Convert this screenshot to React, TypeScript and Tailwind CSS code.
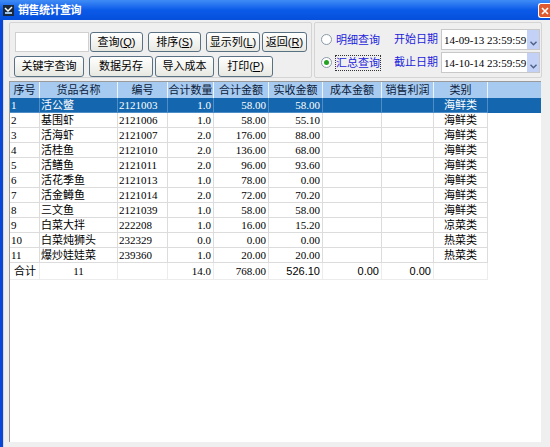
import React from 'react';

type Row = [string, string, string, string, string, string, string];

const rows: Row[] = [
  ['1', '活公鳖', '2121003', '1.0', '58.00', '58.00', '海鲜类'],
  ['2', '基围虾', '2121006', '1.0', '58.00', '55.10', '海鲜类'],
  ['3', '活海虾', '2121007', '2.0', '176.00', '88.00', '海鲜类'],
  ['4', '活桂鱼', '2121010', '2.0', '136.00', '68.00', '海鲜类'],
  ['5', '活鳝鱼', '2121011', '2.0', '96.00', '93.60', '海鲜类'],
  ['6', '活花季鱼', '2121013', '1.0', '78.00', '0.00', '海鲜类'],
  ['7', '活金鳟鱼', '2121014', '2.0', '72.00', '70.20', '海鲜类'],
  ['8', '三文鱼', '2121039', '1.0', '58.00', '58.00', '海鲜类'],
  ['9', '白菜大拌', '222208', '1.0', '16.00', '15.20', '凉菜类'],
  ['10', '白菜炖狮头', '232329', '0.0', '0.00', '0.00', '热菜类'],
  ['11', '爆炒娃娃菜', '239360', '1.0', '20.00', '20.00', '热菜类'],
];

const cols = [
  { label: '序号', w: 'w-[30px]' },
  { label: '货品名称', w: 'w-[78px]' },
  { label: '编号', w: 'w-[50px]' },
  { label: '合计数量', w: 'w-[46px]' },
  { label: '合计金额', w: 'w-[55px]' },
  { label: '实收金额', w: 'w-[54px]' },
  { label: '成本金额', w: 'w-[59px]' },
  { label: '销售利润', w: 'w-[52px]' },
  { label: '类别', w: 'w-[54px]' },
];

const num = 'font-[family-name:Liberation_Serif,serif] text-[11px]';

function Btn({ children, w }: { children: React.ReactNode; w: string }) {
  return (
    <div
      className={`${w} h-full flex items-center justify-center whitespace-nowrap rounded-[3px] border border-[#5a7184] bg-linear-to-b from-[#ffffff] to-[#e8e8e2] text-[11px] text-black`}
    >
      {children}
    </div>
  );
}

function Key({ k }: { k: string }) {
  return (
    <span>
      (<span className="underline">{k}</span>)
    </span>
  );
}

function Radio({ checked }: { checked?: boolean }) {
  return (
    <div className="w-[11px] h-[11px] shrink-0 rounded-full border border-[#8a9aa8] bg-white flex items-center justify-center">
      {checked && <div className="w-[5px] h-[5px] rounded-full bg-[#24a224]" />}
    </div>
  );
}

function DateBox({ value }: { value: string }) {
  return (
    <div className="w-[99px] h-[21px] shrink-0 flex border border-[#c8c8c8] bg-white">
      <div className="flex-1 overflow-hidden whitespace-nowrap pl-[2px] pt-[2px] font-[family-name:Liberation_Serif,serif] text-[11px] text-black">
        {value}
      </div>
      <div className="w-[12px] h-[19px] bg-[#c3d1f7] flex items-end justify-center pb-[3px]">
        <svg width="7" height="5" viewBox="0 0 7 5">
          <path d="M0.5 0.8 L3.5 3.8 L6.5 0.8" stroke="#4d6185" strokeWidth="1.4" fill="none" />
        </svg>
      </div>
    </div>
  );
}

export default function App() {
  return (
    <div className="w-[550px] h-[447px] overflow-hidden flex flex-col bg-[#0848d8] font-[family-name:Liberation_Sans,Noto_Sans_CJK_SC,sans-serif]">
      {/* title bar */}
      <div className="h-[20px] shrink-0 flex items-center bg-linear-to-b from-[#3f8cf6] via-[#0b5ae8] to-[#0550dc] pl-[3px]">
        <svg width="11" height="11" viewBox="0 0 11 11" className="mr-[4px]">
          <rect x="0" y="0" width="11" height="11" fill="#1a2a3a" />
          <path d="M2 3 L5 6 L9 2" stroke="#ffffff" strokeWidth="1.5" fill="none" />
          <rect x="2" y="7" width="7" height="2" fill="#9ec2e8" />
        </svg>
        <span className="text-[11px] font-bold text-white tracking-[-0.5px]">销售统计查询</span>
        <div className="ml-auto mt-[1px] w-[12px] h-[15px] rounded-l-[3px] border border-r-0 border-white bg-[#df5a2f] flex items-center justify-end pr-[1px]">
          <svg width="8" height="8" viewBox="0 0 8 8">
            <path d="M1 1 L7 7 M7 1 L1 7" stroke="#ffffff" strokeWidth="1.6" />
          </svg>
        </div>
      </div>

      <div className="flex-1 flex">
        <div className="w-[3px] bg-[#0846d8]" />
        <div className="flex-1 bg-[#efefef] flex flex-col pl-[5px] pt-[2px] border-l border-[#d8d8d8]">
          {/* toolbar panels */}
          <div className="flex h-[56px] gap-[2px]">
            <div className="w-[303px] border border-[#d4d4d4] rounded-[2px] pl-[5px] pt-[9px] flex flex-col gap-[4px]">
              <div className="flex h-[20px] items-stretch">
                <div className="w-[74px] bg-white border border-[#d0d0d0]" />
                <div className="w-[1px]" />
                <Btn w="w-[53px]">
                  查询<Key k="Q" />
                </Btn>
                <div className="w-[5px]" />
                <Btn w="w-[53px]">
                  排序<Key k="S" />
                </Btn>
                <div className="w-[5px]" />
                <Btn w="w-[54px]">
                  显示列<Key k="L" />
                </Btn>
                <div className="w-[2px]" />
                <Btn w="w-[45px]">
                  返回<Key k="R" />
                </Btn>
              </div>
              <div className="flex h-[21px] items-stretch -ml-[1px]">
                <Btn w="w-[70px]">关键字查询</Btn>
                <div className="w-[5px]" />
                <Btn w="w-[64px]">数据另存</Btn>
                <div className="w-[2px]" />
                <Btn w="w-[59px]">导入成本</Btn>
                <div className="w-[4px]" />
                <Btn w="w-[55px]">
                  打印<Key k="P" />
                </Btn>
              </div>
            </div>

            <div className="w-[228px] border border-[#d4d4d4] rounded-[2px] pl-[6px] pt-[6px] flex flex-col gap-[2px]">
              <div className="flex h-[21px] items-center">
                <Radio />
                <div className="w-[46px] shrink-0 ml-[3px] whitespace-nowrap text-center text-[11px] leading-[14px] text-[#1d1ddb] border border-transparent">明细查询</div>
                <div className="w-[13px] shrink-0" />
                <div className="w-[47px] shrink-0 whitespace-nowrap text-[11px] text-[#1d1ddb]">开始日期</div>
                <DateBox value="14-09-13 23:59:59" />
              </div>
              <div className="flex h-[21px] items-center">
                <Radio checked />
                <div className="w-[46px] shrink-0 ml-[3px] whitespace-nowrap text-center text-[11px] leading-[14px] text-[#1d1ddb] border border-dotted border-[#333]">汇总查询</div>
                <div className="w-[13px] shrink-0" />
                <div className="w-[47px] shrink-0 whitespace-nowrap text-[11px] text-[#1d1ddb]">截止日期</div>
                <DateBox value="14-10-14 23:59:59" />
              </div>
            </div>
          </div>

          {/* grid */}
          <div className="mt-[3px] w-[532px] h-[361px] bg-white border-l border-t border-[#9a9a9a] flex flex-col text-[11px]">
            <div className="h-[16px] flex bg-[#a6caf0] text-[#0b1a3a]">
              {cols.map((c) => (
                <div key={c.label} className={`${c.w} shrink-0 border-r border-[#eef4fb] flex items-center justify-center leading-none`}>
                  {c.label}
                </div>
              ))}
            </div>

            {rows.map((r, i) => {
              const sel = i === 0;
              const line = sel ? 'border-[#4e8dc6]' : 'border-[#dcdcdc]';
              const txt = sel ? 'text-white' : 'text-black';
              return (
                <div key={r[0]} className={`h-[15px] flex ${sel ? 'bg-[#1467ae]' : ''} ${txt}`}>
                  <div className={`w-[30px] shrink-0 border-r border-b ${line} pl-[1px] leading-[14px] ${num}`}>{r[0]}</div>
                  <div className={`w-[78px] shrink-0 border-r border-b ${line} pl-[1px] leading-[14px]`}>{r[1]}</div>
                  <div className={`w-[50px] shrink-0 border-r border-b ${line} pl-[1px] leading-[14px] ${num}`}>{r[2]}</div>
                  <div className={`w-[46px] shrink-0 border-r border-b ${line} pr-[2px] text-right leading-[14px] ${num}`}>{r[3]}</div>
                  <div className={`w-[55px] shrink-0 border-r border-b ${line} pr-[2px] text-right leading-[14px] ${num}`}>{r[4]}</div>
                  <div className={`w-[54px] shrink-0 border-r border-b ${line} pr-[2px] text-right leading-[14px] ${num}`}>{r[5]}</div>
                  <div className={`w-[59px] shrink-0 border-r border-b ${line}`} />
                  <div className={`w-[52px] shrink-0 border-r border-b ${line}`} />
                  <div className={`w-[54px] shrink-0 border-r border-b ${line} text-center leading-[14px]`}>{r[6]}</div>
                </div>
              );
            })}

            <div className="h-[17px] flex text-black">
              <div className="w-[30px] shrink-0 border-r border-b border-[#ececec] pl-[4px] leading-[16px]">合计</div>
              <div className={`w-[78px] shrink-0 border-r border-b border-[#ececec] text-center leading-[16px] ${num}`}>11</div>
              <div className="w-[50px] shrink-0 border-r border-b border-[#ececec]" />
              <div className={`w-[46px] shrink-0 border-r border-b border-[#ececec] pr-[2px] text-right leading-[16px] ${num}`}>14.0</div>
              <div className={`w-[55px] shrink-0 border-r border-b border-[#ececec] pr-[2px] text-right leading-[16px] ${num}`}>768.00</div>
              <div className="w-[54px] shrink-0 border-r border-b border-[#ececec] pr-[2px] text-right leading-[16px] text-[11px]">526.10</div>
              <div className="w-[59px] shrink-0 border-r border-b border-[#ececec] pr-[2px] text-right leading-[16px] text-[11px]">0.00</div>
              <div className="w-[52px] shrink-0 border-r border-b border-[#ececec] pr-[2px] text-right leading-[16px] text-[11px]">0.00</div>
              <div className="w-[54px] shrink-0 border-r border-b border-[#ececec]" />
            </div>
          </div>
          <div className="flex-1" />
        </div>
      </div>
    </div>
  );
}
